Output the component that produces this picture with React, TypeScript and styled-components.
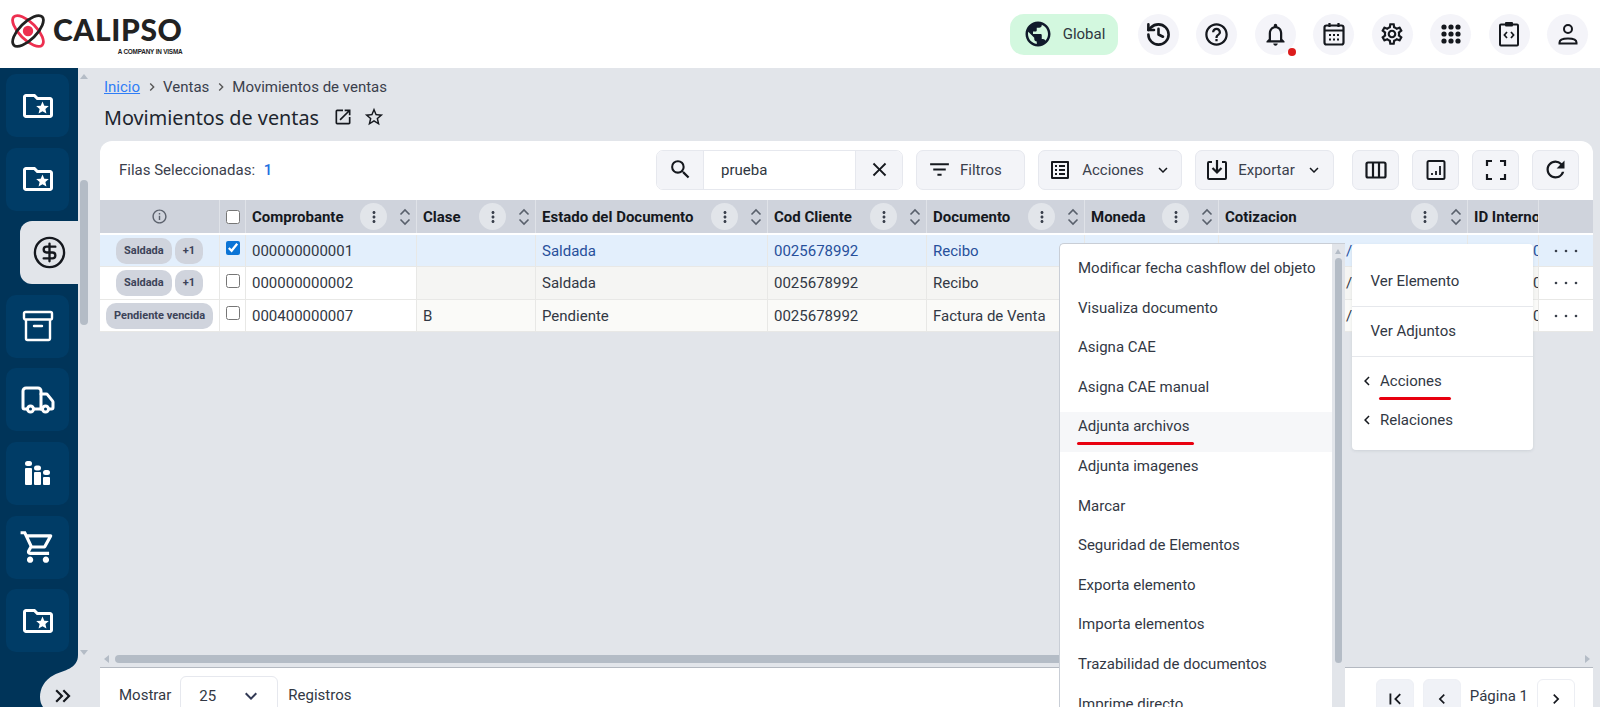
import { createGlobalStyle, styled } from "styled-components";
import { CircleDollarSign, History, Truck } from "lucide-react";
import {
  MdClose,
  MdExpandMore,
  MdFilterList,
  MdInfoOutline,
  MdKeyboardArrowLeft,
  MdKeyboardArrowRight,
  MdKeyboardDoubleArrowRight,
  MdFirstPage,
  MdOpenInNew,
  MdOutlineFolderSpecial,
  MdOutlineHelpOutline,
  MdOutlineListAlt,
  MdOutlineNotifications,
  MdOutlineSettings,
  MdOutlineShoppingCart,
  MdPublic,
  MdRefresh,
  MdSearch,
  MdStarBorder,
  MdMoreVert,
} from "react-icons/md";

const GlobalStyle = createGlobalStyle`
  html, body {
    margin: 0;
    height: 100%;
    overflow: hidden;
  }
  body {
    font-family: Roboto, "Liberation Sans", sans-serif;
    color: #323844;
    background: #e2e5ea;
  }
  * { box-sizing: border-box; }
`;

const columns = [120, 26, 171, 119, 232, 159, 158, 134, 249, 71, 54];

const headings = [
  "Comprobante",
  "Clase",
  "Estado del Documento",
  "Cod Cliente",
  "Documento",
  "Moneda",
  "Cotizacion",
];

const rows = [
  { chips: ["Saldada", "+1"], id: "000000000001", clase: "", estado: "Saldada", doc: "Recibo", selected: true, bg: "#e3effc", stickyBg: "#e3effc" },
  { chips: ["Saldada", "+1"], id: "000000000002", clase: "", estado: "Saldada", doc: "Recibo", selected: false, bg: "#f5f5f3", stickyBg: "#ffffff" },
  { chips: ["Pendiente vencida"], id: "000400000007", clase: "B", estado: "Pendiente", doc: "Factura de Venta", selected: false, bg: "#fafaf8", stickyBg: "#ffffff" },
];

const actionItems = [
  "Modificar fecha cashflow del objeto",
  "Visualiza documento",
  "Asigna CAE",
  "Asigna CAE manual",
  "Adjunta archivos",
  "Adjunta imagenes",
  "Marcar",
  "Seguridad de Elementos",
  "Exporta elemento",
  "Importa elementos",
  "Trazabilidad de documentos",
  "Imprime directo",
];

function LogoMark() {
  return (
    <svg width="38" height="38" viewBox="0 0 38 38" fill="none">
      <ellipse cx="19" cy="19" rx="20" ry="8.5" transform="rotate(45 19 19)" stroke="#ed2f4f" strokeWidth="2.8" />
      <ellipse cx="19" cy="19" rx="20" ry="8.5" transform="rotate(-45 19 19)" stroke="#222" strokeWidth="2.8" />
      <circle cx="19" cy="19" r="5.2" fill="#ed2f4f" />
    </svg>
  );
}

function CalendarIcon() {
  return (
    <svg width="22" height="24" viewBox="0 0 22 24" fill="none" stroke="#15181e" strokeWidth="2.2">
      <rect x="1.500" y="3.500" width="19" height="19" rx="2" />
      <path d="M1.500 8.500h19M6.500 1v4M15.500 1v4" />
      <path d="M6 13h2M10 13h2M14 13h2M6 17.500h2M10 17.500h2M14 17.500h2" strokeWidth="2" />
    </svg>
  );
}

function AppsIcon() {
  return (
    <svg width="20" height="20" viewBox="0 0 20 20" fill="#15181e">
      {[3, 10, 17].map((y) =>
        [3, 10, 17].map((x) => <circle key={`${x}-${y}`} cx={x} cy={y} r="2.600" />)
      )}
    </svg>
  );
}

function ClipboardCodeIcon() {
  return (
    <svg width="22" height="26" viewBox="0 0 22 26" fill="none" stroke="#15181e" strokeWidth="2">
      <path d="M7 3.500H3a1 1 0 0 0-1 1v19a1 1 0 0 0 1 1h16a1 1 0 0 0 1-1v-19a1 1 0 0 0-1-1h-4" />
      <rect x="7" y="1" width="8" height="4.500" fill="#15181e" stroke="none" rx="1" />
      <path d="M9 11l-2.600 3 2.600 3M13 11l2.600 3-2.600 3" strokeWidth="1.700" />
    </svg>
  );
}

function PersonIcon() {
  return (
    <svg width="22" height="24" viewBox="0 0 22 24" fill="none" stroke="#15181e" strokeWidth="2">
      <circle cx="11" cy="7" r="4" />
      <path d="M2.500 20.500c0-2.600 3.800-4 8.500-4s8.500 1.400 8.500 4v1h-17z" />
    </svg>
  );
}

function ArchiveIcon() {
  return (
    <svg width="32" height="32" viewBox="0 0 32 32" fill="none" stroke="#fff" strokeWidth="2.400">
      <rect x="2" y="2" width="28" height="7.500" rx="1.500" />
      <path d="M4 9.500v19a1.500 1.500 0 0 0 1.500 1.500h21a1.500 1.500 0 0 0 1.500-1.500v-19" />
      <path d="M12 16h8" strokeLinecap="round" />
    </svg>
  );
}

function BarsIcon() {
  return (
    <svg width="25" height="24" viewBox="0 0 25 24" fill="#fff">
      <rect x="0" y="0" width="7" height="5" rx="2.500" />
      <rect x="0" y="7" width="7" height="17" rx="1" />
      <rect x="9" y="4.500" width="7" height="5" rx="2.500" />
      <rect x="9" y="11" width="7" height="13" rx="1" />
      <rect x="18" y="9" width="7" height="5" rx="2.500" />
      <rect x="18" y="16" width="7" height="8" rx="1" />
    </svg>
  );
}

function ExportIcon() {
  return (
    <svg width="22" height="22" viewBox="0 0 22 22" fill="none" stroke="#15181e" strokeWidth="2">
      <path d="M6 3H3a1 1 0 0 0-1 1v15a1 1 0 0 0 1 1h16a1 1 0 0 0 1-1V4a1 1 0 0 0-1-1h-3" />
      <path d="M11 1v12M6.500 9l4.500 4.500L15.500 9" strokeWidth="2.200" />
    </svg>
  );
}

function ColumnsIcon() {
  return (
    <svg width="22" height="22" viewBox="0 0 22 22" fill="none" stroke="#15181e" strokeWidth="2.200">
      <rect x="1.500" y="3.500" width="19" height="15" rx="1.500" />
      <path d="M8 3.500v15M14 3.500v15" />
    </svg>
  );
}

function ReportIcon() {
  return (
    <svg width="20" height="22" viewBox="0 0 20 22" fill="none" stroke="#15181e" strokeWidth="2">
      <rect x="1.500" y="2" width="17" height="18" rx="1.500" />
      <path d="M6 16v-2M10 16v-4M14 16V7" strokeWidth="1.800" />
    </svg>
  );
}

function FullscreenIcon() {
  return (
    <svg width="22" height="22" viewBox="0 0 22 22" fill="none" stroke="#15181e" strokeWidth="2.200">
      <path d="M2 7V2h5M15 2h5v5M20 15v5h-5M7 20H2v-5" />
    </svg>
  );
}

function SortIcon() {
  return (
    <svg width="12" height="18" viewBox="0 0 12 18" fill="none" stroke="#59606c" strokeWidth="1.600">
      <path d="M1.500 6.500L6 2l4.500 4.500M1.500 11.500L6 16l4.500-4.500" />
    </svg>
  );
}

function RowDots() {
  return (
    <svg width="24" height="4" viewBox="0 0 24 4" fill="#3a404c">
      <circle cx="2" cy="2" r="1.300" />
      <circle cx="12" cy="2" r="1.300" />
      <circle cx="22" cy="2" r="1.300" />
    </svg>
  );
}

export default function App() {
  return (
    <>
      <GlobalStyle />
      <Page>
        <TopBar>
          <Logo>
            <LogoMark />
            <LogoText>
              <LogoName>CALIPSO</LogoName>
              <LogoTag>A COMPANY IN VISMA</LogoTag>
            </LogoText>
          </Logo>
          <TopActions>
            <GlobalPill>
              <MdPublic size={30} color="#101a2b" />
              Global
            </GlobalPill>
            <RoundButton><History size={27} color="#15181e" strokeWidth={2.3} /></RoundButton>
            <RoundButton><MdOutlineHelpOutline size={27} color="#15181e" /></RoundButton>
            <RoundButton $dot><MdOutlineNotifications size={27} color="#15181e" /></RoundButton>
            <RoundButton><CalendarIcon /></RoundButton>
            <RoundButton><MdOutlineSettings size={26} color="#15181e" /></RoundButton>
            <RoundButton><AppsIcon /></RoundButton>
            <RoundButton><ClipboardCodeIcon /></RoundButton>
            <RoundButton><PersonIcon /></RoundButton>
          </TopActions>
        </TopBar>

        <Body>
          <Sidebar>
            <Tile><MdOutlineFolderSpecial size={36} /></Tile>
            <Tile><MdOutlineFolderSpecial size={36} /></Tile>
            <Tile $active><CircleDollarSign size={35} strokeWidth={1.6} /></Tile>
            <Tile><ArchiveIcon /></Tile>
            <Tile><Truck size={36} strokeWidth={2} /></Tile>
            <Tile><BarsIcon /></Tile>
            <Tile><MdOutlineShoppingCart size={38} /></Tile>
            <Tile><MdOutlineFolderSpecial size={36} /></Tile>
            <Notch>
              <svg width="38" height="52" viewBox="0 0 38 52">
                <path d="M38 0C38 14 24 15 14 20C4 25 0 34 0 42C0 46 1 49 3 52H38Z" fill="#e2e5ea" />
              </svg>
              <NotchIcon><MdKeyboardDoubleArrowRight size={26} /></NotchIcon>
            </Notch>
          </Sidebar>

          <Rail>
            <ArrowUp />
            <RailThumb />
            <ArrowDown />
          </Rail>

          <Main>
            <Crumbs>
              <CrumbLink href="#">Inicio</CrumbLink>
              <MdKeyboardArrowRight size={16} color="#555" />
              <span>Ventas</span>
              <MdKeyboardArrowRight size={16} color="#555" />
              <span>Movimientos de ventas</span>
            </Crumbs>
            <TitleRow>
              <Title>Movimientos de ventas</Title>
              <MdOpenInNew size={20} color="#15181e" />
              <MdStarBorder size={22} color="#15181e" />
            </TitleRow>

            <Toolbar>
              <Selected>
                Filas Seleccionadas: <SelectedCount>1</SelectedCount>
              </Selected>
              <ToolbarRight>
                <SearchBox>
                  <SearchSide><MdSearch size={25} color="#15181e" /></SearchSide>
                  <SearchInput>prueba</SearchInput>
                  <SearchSide><MdClose size={23} color="#15181e" /></SearchSide>
                </SearchBox>
                <ToolButton $width={109} $start><MdFilterList size={25} color="#15181e" />Filtros</ToolButton>
                <ToolButton $width={144}>
                  <MdOutlineListAlt size={24} color="#15181e" />Acciones
                  <MdExpandMore size={18} color="#15181e" />
                </ToolButton>
                <ToolButton $width={139}>
                  <ExportIcon />Exportar
                  <MdExpandMore size={18} color="#15181e" />
                </ToolButton>
                <IconGroup>
                  <ToolButton $width={47}><ColumnsIcon /></ToolButton>
                  <ToolButton $width={47}><ReportIcon /></ToolButton>
                  <ToolButton $width={47}><FullscreenIcon /></ToolButton>
                  <ToolButton $width={47}><MdRefresh size={27} color="#15181e" /></ToolButton>
                </IconGroup>
              </ToolbarRight>
            </Toolbar>

            <HeadRow>
              <HeadCell $width={columns[0]} $center><MdInfoOutline size={17} color="#5b616c" /></HeadCell>
              <HeadCell $width={columns[1]} $center><Check type="checkbox" readOnly /></HeadCell>
              {headings.map((h, i) => (
                <HeadCell key={h} $width={columns[i + 2]}>
                  <HeadLabel>{h}</HeadLabel>
                  <DotsButton><MdMoreVert size={18} color="#3a404c" /></DotsButton>
                  <SortIcon />
                </HeadCell>
              ))}
              <HeadCell $width={columns[9]}><HeadLabel>ID Interno</HeadLabel></HeadCell>
              <HeadCell $width={columns[10]} $plain />
            </HeadRow>

            {rows.map((r, i) => (
              <Row key={r.id} $height={i === 1 ? 33 : 32} $blue={r.selected}>
                <Cell $width={columns[0]} $bg={r.stickyBg} $center>
                  <ChipRow>
                    {r.chips.map((c) => <Chip key={c}>{c}</Chip>)}
                  </ChipRow>
                </Cell>
                <Cell $width={columns[1]} $bg={r.stickyBg} $center>
                  <RowCheck type="checkbox" checked={r.selected} readOnly />
                </Cell>
                <Cell $width={columns[2]} $bg={r.stickyBg} $dark>{r.id}</Cell>
                <Cell $width={columns[3]} $bg={r.bg}>{r.clase}</Cell>
                <Cell $width={columns[4]} $bg={r.bg}>{r.estado}</Cell>
                <Cell $width={columns[5]} $bg={r.bg}>0025678992</Cell>
                <Cell $width={columns[6]} $bg={r.bg}>{r.doc}</Cell>
                <Cell $width={columns[7]} $bg={r.bg} />
                <Cell $width={columns[8]} $bg={r.bg} $pad={127}>/</Cell>
                <Cell $width={columns[9]} $bg={r.bg} $pad={65}>0000</Cell>
                <Cell $width={columns[10]} $bg={r.stickyBg} $center $plain><RowDots /></Cell>
              </Row>
            ))}

            <Spacer />

            <HScroll>
              <ArrowLeft />
              <HThumb />
              <ArrowRight />
            </HScroll>

            <Footer>
              <span>Mostrar</span>
              <PageSize>
                25
                <MdExpandMore size={24} color="#323a55" />
              </PageSize>
              <span>Registros</span>
              <Pager>
                <PageButton $tinted><MdFirstPage size={22} color="#15181e" /></PageButton>
                <PageButton $tinted><MdKeyboardArrowLeft size={20} color="#15181e" /></PageButton>
                <PageLabel>Página 1</PageLabel>
                <PageButton><MdKeyboardArrowRight size={20} color="#15181e" /></PageButton>
              </Pager>
            </Footer>
          </Main>
        </Body>

        <ActionsMenu>
          <ActionsList>
            {actionItems.map((item) => (
              <ActionItem key={item} $hover={item === "Adjunta archivos"}>
                {item === "Adjunta archivos" ? <Marked $extra={4}>{item}</Marked> : item}
              </ActionItem>
            ))}
          </ActionsList>
          <MenuTrack>
            <MenuArrow />
            <MenuThumb />
          </MenuTrack>
        </ActionsMenu>

        <RowMenu>
          <RowMenuGroup $top={17} $bottom={6}>
            <RowMenuItem>Ver Elemento</RowMenuItem>
          </RowMenuGroup>
          <RowMenuGroup $top={4} $bottom={6}>
            <RowMenuItem>Ver Adjuntos</RowMenuItem>
          </RowMenuGroup>
          <RowMenuGroup $top={4} $bottom={11} $last>
            <RowMenuItem $sub>
              <MdKeyboardArrowLeft size={18} color="#15181e" />
              <Marked $extra={9}>Acciones</Marked>
            </RowMenuItem>
            <RowMenuItem $sub>
              <MdKeyboardArrowLeft size={18} color="#15181e" />
              Relaciones
            </RowMenuItem>
          </RowMenuGroup>
        </RowMenu>
      </Page>
    </>
  );
}

const Page = styled.div`
  position: relative;
  width: 1600px;
  height: 707px;
  overflow: hidden;
  display: flex;
  flex-direction: column;
`;

const TopBar = styled.header`
  height: 68px;
  background: #fff;
  display: flex;
  align-items: center;
  justify-content: space-between;
  padding: 0 12px 0 9px;
  flex: none;
`;

const Logo = styled.div`
  display: flex;
  align-items: flex-start;
  gap: 6px;
`;

const LogoText = styled.div`
  display: flex;
  flex-direction: column;
  align-items: flex-end;
`;

const LogoName = styled.div`
  font-family: Lato, "Liberation Sans", sans-serif;
  font-weight: 900;
  font-size: 30px;
  line-height: 35px;
  letter-spacing: 0.6px;
  color: #222;
`;

const LogoTag = styled.div`
  font-family: "Liberation Sans", sans-serif;
  font-weight: 700;
  font-size: 6.4px;
  line-height: 9px;
  letter-spacing: -0.2px;
  color: #222;
`;

const TopActions = styled.div`
  display: flex;
  align-items: center;
  gap: 17.5px;
`;

const GlobalPill = styled.div`
  width: 108px;
  height: 41px;
  border-radius: 14px;
  background: #d3f8df;
  display: flex;
  align-items: center;
  justify-content: center;
  gap: 10px;
  font-size: 15px;
  color: #2f3640;
  margin-right: 2px;
`;

const RoundButton = styled.div<{ $dot?: boolean }>`
  position: relative;
  width: 41px;
  height: 41px;
  border-radius: 50%;
  background: #f4f4f9;
  display: flex;
  align-items: center;
  justify-content: center;

  ${({ $dot }) =>
    $dot &&
    `&::after {
      content: "";
      position: absolute;
      right: 0;
      bottom: -1px;
      width: 8px;
      height: 8px;
      border-radius: 50%;
      background: #dc1c1c;
    }`}
`;

const Body = styled.div`
  flex: 1;
  min-height: 0;
  display: flex;
`;

const Sidebar = styled.nav`
  position: relative;
  width: 78px;
  flex: none;
  background: #003459;
  padding-top: 6px;
  display: flex;
  flex-direction: column;
  gap: 10.6px;
`;

const Tile = styled.div<{ $active?: boolean }>`
  height: 63px;
  width: ${({ $active }) => ($active ? "58px" : "63px")};
  margin-left: ${({ $active }) => ($active ? "20px" : "6px")};
  border-radius: ${({ $active }) => ($active ? "12px 0 0 12px" : "10px")};
  background: ${({ $active }) => ($active ? "#e2e5ea" : "#003c66")};
  color: ${({ $active }) => ($active ? "#15181e" : "#fff")};
  display: flex;
  align-items: center;
  justify-content: center;
`;

const Notch = styled.div`
  position: absolute;
  right: 0;
  bottom: 0;
  width: 38px;
  height: 52px;
  display: flex;

  svg {
    display: block;
  }
`;

const NotchIcon = styled.div`
  position: absolute;
  left: 10px;
  bottom: -2px;
  color: #15181e;
`;

const Rail = styled.div`
  width: 22px;
  flex: none;
  padding: 6px 0 52px 2px;
  display: flex;
  flex-direction: column;
`;

const ArrowUp = styled.div`
  width: 0;
  height: 0;
  border-left: 4px solid transparent;
  border-right: 4px solid transparent;
  border-bottom: 5px solid #b4bcc6;
`;

const ArrowDown = styled.div`
  width: 0;
  height: 0;
  margin-top: auto;
  border-left: 4px solid transparent;
  border-right: 4px solid transparent;
  border-top: 5px solid #b4bcc6;
`;

const RailThumb = styled.div`
  width: 8px;
  height: 145px;
  margin-top: 101px;
  border-radius: 4px;
  background: #b4bcc6;
`;

const Main = styled.main`
  flex: 1;
  min-width: 0;
  margin-right: 7px;
  display: flex;
  flex-direction: column;
`;

const Crumbs = styled.div`
  height: 20px;
  margin-top: 9px;
  padding-left: 4px;
  display: flex;
  align-items: center;
  gap: 3.5px;
  font-size: 15px;
  color: #3a404c;
`;

const CrumbLink = styled.a`
  color: #2f7df6;
  text-decoration: underline;
`;

const TitleRow = styled.div`
  height: 40px;
  margin-bottom: 4px;
  padding-left: 4px;
  display: flex;
  align-items: center;
  gap: 10px;
`;

const Title = styled.h1`
  margin: 0 4px 0 0;
  font-family: "Noto Sans", sans-serif;
  font-weight: 400;
  font-size: 19.8px;
  color: #20252e;
`;

const Toolbar = styled.div`
  height: 59px;
  flex: none;
  background: #fff;
  border-radius: 12px 12px 0 0;
  padding: 0 14px 2px 19px;
  display: flex;
  align-items: center;
  justify-content: space-between;
`;

const Selected = styled.div`
  font-size: 15px;
  color: #3a404c;
`;

const SelectedCount = styled.span`
  margin-left: 5px;
  color: #1f6fe0;
  font-weight: 500;
`;

const ToolbarRight = styled.div`
  display: flex;
  align-items: center;
  gap: 13px;
`;

const SearchBox = styled.div`
  width: 247px;
  height: 40px;
  display: flex;
  border: 1px solid #e6e8ee;
  border-radius: 7px;
  overflow: hidden;
`;

const SearchSide = styled.div`
  width: 46px;
  flex: none;
  background: #f3f4f8;
  display: flex;
  align-items: center;
  justify-content: center;
`;

const SearchInput = styled.div`
  flex: 1;
  padding-left: 17px;
  background: #fff;
  border-left: 1px solid #e6e8ee;
  border-right: 1px solid #e6e8ee;
  font-size: 15px;
  line-height: 38px;
  color: #2f3640;
`;

const ToolButton = styled.div<{ $width: number; $start?: boolean }>`
  width: ${({ $width }) => $width}px;
  height: 40px;
  flex: none;
  background: #f3f4f8;
  border: 1px solid #e6e8ee;
  border-radius: 7px;
  display: flex;
  align-items: center;
  justify-content: ${({ $start }) => ($start ? "flex-start" : "center")};
  padding-left: ${({ $start }) => ($start ? "10px" : "0")};
  gap: ${({ $start }) => ($start ? "8px" : "10px")};
  font-size: 15px;
  color: #3a404c;
`;

const IconGroup = styled.div`
  display: flex;
  gap: 13px;
  margin-left: 5px;
`;

const HeadRow = styled.div`
  display: flex;
  height: 35px;
  padding-bottom: 2px;
  background: #fff;
`;

const HeadCell = styled.div<{ $width: number; $center?: boolean; $plain?: boolean }>`
  width: ${({ $width }) => $width}px;
  flex: none;
  display: flex;
  align-items: center;
  justify-content: ${({ $center }) => ($center ? "center" : "flex-start")};
  padding: ${({ $center }) => ($center ? "0" : "0 0 0 6px")};
  background: #cfd3dc;
  border-right: ${({ $plain }) => ($plain ? "none" : "1px solid #dfe2e8")};
  overflow: hidden;
`;

const HeadLabel = styled.span`
  font-size: 15px;
  font-weight: 700;
  color: #15181e;
  white-space: nowrap;
  margin-right: auto;
`;

const DotsButton = styled.div`
  width: 27px;
  height: 27px;
  flex: none;
  margin-right: 12px;
  border-radius: 50%;
  background: #e2e5ea;
  display: flex;
  align-items: center;
  justify-content: center;

  & + svg {
    flex: none;
    margin-right: 5px;
  }
`;

const Check = styled.input`
  width: 14px;
  height: 14px;
  margin: 0;
  accent-color: #0b74d6;
`;

const RowCheck = styled(Check)`
  margin-bottom: 5px;
`;

const Row = styled.div<{ $height: number; $blue: boolean }>`
  display: flex;
  height: ${({ $height }) => $height}px;
  font-size: 15px;
  color: ${({ $blue }) => ($blue ? "#27509b" : "#323844")};
  border-bottom: 1px solid #e8e8e6;
`;

const Cell = styled.div<{ $width: number; $bg: string; $center?: boolean; $plain?: boolean; $pad?: number; $dark?: boolean }>`
  width: ${({ $width }) => $width}px;
  flex: none;
  display: flex;
  align-items: center;
  justify-content: ${({ $center }) => ($center ? "center" : "flex-start")};
  padding-left: ${({ $center, $pad }) => ($center ? 0 : ($pad ?? 6))}px;
  background: ${({ $bg }) => $bg};
  border-right: ${({ $plain }) => ($plain ? "none" : "1px solid #e8e8e6")};
  white-space: nowrap;
  overflow: hidden;
  ${({ $dark }) => $dark && "color: #323844;"}
`;

const ChipRow = styled.div`
  display: flex;
  gap: 3px;
`;

const Chip = styled.span`
  height: 26px;
  padding: 0 8px;
  border-radius: 10px;
  background: #d0d4dd;
  color: #3c4358;
  font-size: 11px;
  font-weight: 700;
  line-height: 26px;
  white-space: nowrap;
`;

const Spacer = styled.div`
  flex: 1;
`;

const HScroll = styled.div`
  height: 16px;
  flex: none;
  display: flex;
  align-items: center;
  padding: 0 3px 0 4px;
`;

const ArrowLeft = styled.div`
  width: 0;
  height: 0;
  border-top: 4px solid transparent;
  border-bottom: 4px solid transparent;
  border-right: 5px solid #b4bcc6;
`;

const ArrowRight = styled.div`
  width: 0;
  height: 0;
  border-top: 4px solid transparent;
  border-bottom: 4px solid transparent;
  border-left: 5px solid #b4bcc6;
`;

const HThumb = styled.div`
  width: 1200px;
  height: 8px;
  margin-left: 6px;
  margin-right: auto;
  border-radius: 4px;
  background: #b4bcc6;
`;

const Footer = styled.footer`
  height: 40px;
  flex: none;
  background: #fff;
  border-top: 1px solid #b4b9c1;
  padding: 7px 18px 0 19px;
  display: flex;
  align-items: flex-start;
  overflow: hidden;
  font-size: 15px;
  line-height: 40px;
  color: #323844;
`;

const PageSize = styled.div`
  width: 98px;
  height: 40px;
  flex: none;
  margin: 1px 10px 0 9px;
  padding: 0 14px 0 18px;
  border: 1px solid #e6e8ee;
  border-radius: 6px;
  display: flex;
  align-items: center;
  justify-content: space-between;
`;

const Pager = styled.div`
  margin-left: auto;
  padding-top: 4px;
  display: flex;
  gap: 9px;
`;

const PageButton = styled.div<{ $tinted?: boolean }>`
  width: 38px;
  height: 40px;
  border-radius: 6px;
  border: 1px solid ${({ $tinted }) => ($tinted ? "#eef0f5" : "#eceef3")};
  background: ${({ $tinted }) => ($tinted ? "#f0f2f7" : "#fff")};
  display: flex;
  align-items: center;
  justify-content: center;
`;

const PageLabel = styled.span`
  line-height: 34px;
`;

const ActionsMenu = styled.div`
  position: absolute;
  left: 1059px;
  top: 243px;
  width: 286px;
  height: 480px;
  display: flex;
  background: #fff;
  border-top: 1px solid #c9ced6;
  border-left: 1px solid #c9ced6;
  border-top-left-radius: 5px;
`;

const ActionsList = styled.div`
  flex: 1;
  padding-top: 10px;
`;

const ActionItem = styled.div<{ $hover: boolean }>`
  height: 39.6px;
  padding-left: 18px;
  font-size: 15px;
  line-height: 29px;
  color: #323844;
  background: ${({ $hover }) => ($hover ? "#f6f7f9" : "transparent")};
`;

const Marked = styled.span<{ $extra: number }>`
  position: relative;

  &::after {
    content: "";
    position: absolute;
    left: -1px;
    right: -${({ $extra }) => $extra}px;
    bottom: -10px;
    height: 3px;
    border-radius: 2px;
    background: #e8000f;
  }
`;

const MenuTrack = styled.div`
  width: 13px;
  flex: none;
  background: #e2e5ea;
  padding: 5px 3px 0;
`;

const MenuArrow = styled.div`
  width: 0;
  height: 0;
  border-left: 3.500px solid transparent;
  border-right: 3.500px solid transparent;
  border-bottom: 5px solid #b4bcc6;
`;

const MenuThumb = styled.div`
  width: 7px;
  height: 405px;
  margin-top: 4px;
  border-radius: 4px;
  background: #b4bcc6;
`;

const RowMenu = styled.div`
  position: absolute;
  left: 1352px;
  top: 244px;
  width: 181px;
  background: #fff;
  border-radius: 4px;
  box-shadow: 0 1px 3px rgba(60, 70, 90, 0.12);
`;

const RowMenuGroup = styled.div<{ $top: number; $bottom: number; $last?: boolean }>`
  padding: ${({ $top }) => $top}px 0 ${({ $bottom }) => $bottom}px;
  border-bottom: ${({ $last }) => ($last ? "none" : "1px solid #e6e8ec")};
`;

const RowMenuItem = styled.div<{ $sub?: boolean }>`
  height: 39px;
  padding-left: ${({ $sub }) => ($sub ? "6px" : "18.5px")};
  display: flex;
  align-items: center;
  gap: 4px;
  font-size: 15px;
  color: #323844;
`;
